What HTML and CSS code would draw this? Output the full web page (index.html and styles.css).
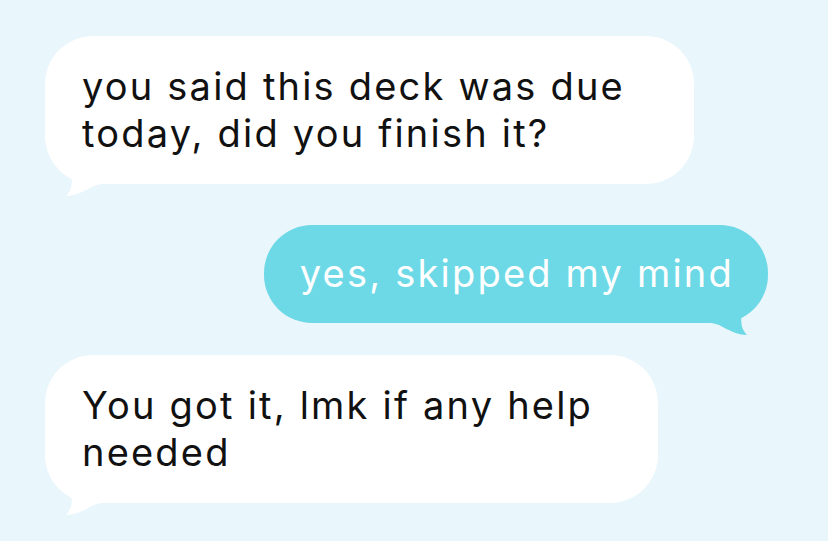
FILE: index.html
```html
<!DOCTYPE html>
<html lang="en">
<head>
    <meta charset="utf-8">
    <title>Messages</title>
    <link rel="stylesheet" href="styles.css">
</head>
<body>
<div class="thread">
    <div class="bubble in first">
        you said this deck was due today, did you finish it?
        <svg class="tail" viewBox="0 -30 70 43" width="70" height="43"><path d="M24 -30 L26 -10 C28 0 26 7 21 12 C30 12 40 7 49 2 C58 -1 64 -1 70 -1 L70 -30 Z"/></svg>
    </div>
    <div class="bubble out">
        yes, skipped my mind
        <svg class="tail" viewBox="0 -30 70 43" width="70" height="43"><path d="M24 -30 L26 -10 C28 0 26 7 21 12 C30 12 40 7 49 2 C58 -1 64 -1 70 -1 L70 -30 Z"/></svg>
    </div>
    <div class="bubble in last">
        You got it, lmk if any help needed
        <svg class="tail" viewBox="0 -30 70 43" width="70" height="43"><path d="M24 -30 L26 -10 C28 0 26 7 21 12 C30 12 40 7 49 2 C58 -1 64 -1 70 -1 L70 -30 Z"/></svg>
    </div>
</div>
</body>
</html>
```

FILE: styles.css
```css
html, body {
    margin: 0;
    height: 100%;
}
body {
    background: #e9f6fb;
    font-family: Inter, "Noto Sans", sans-serif;
    overflow: hidden;
}
.thread {
    display: flex;
    flex-direction: column;
    align-items: flex-start;
    padding: 36px 60px 0 45px;
}
.bubble {
    position: relative;
    box-sizing: border-box;
    font-size: 38px;
    line-height: 47px;
    letter-spacing: 2.2px;
    padding: 27px 30px 27px 37px;
    border-radius: 48px;
    background: #fff;
    color: #111;
}
.bubble .tail {
    position: absolute;
    left: 0;
    bottom: -13px;
    fill: #fff;
}
.first {
    width: 649px;
}
.out {
    align-self: flex-end;
    margin-top: 41px;
    padding: 25px 34px 26px 36px;
    background: #6dd9e6;
    color: #fff;
}
.out .tail {
    left: auto;
    right: 0;
    fill: #6dd9e6;
    transform: scaleX(-1);
}
.last {
    width: 613px;
    margin-top: 32px;
}
```
